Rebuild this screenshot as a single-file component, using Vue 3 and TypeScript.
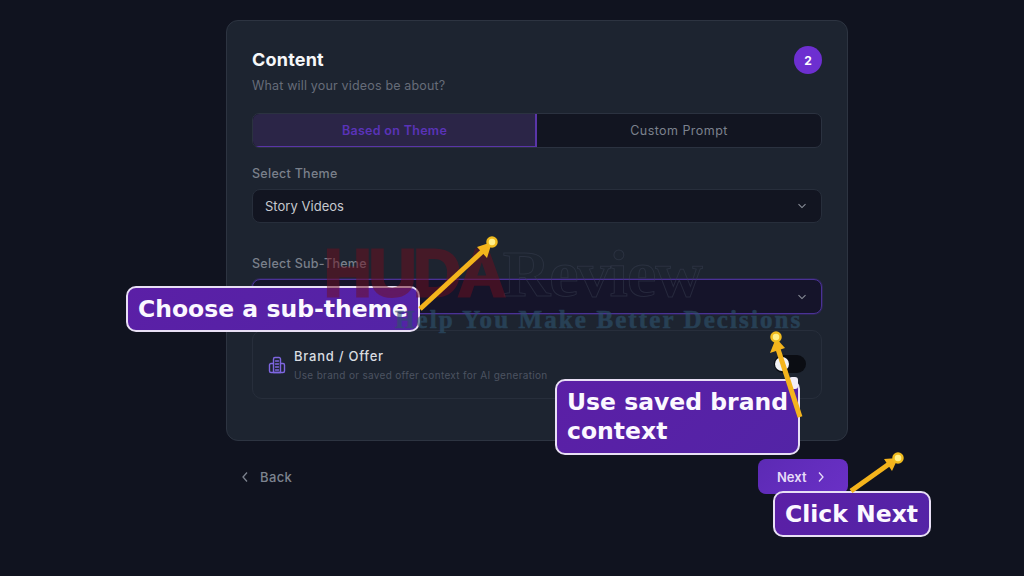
<template>
  <div class="page">
    <main class="wizard">
      <section class="card">
        <header class="card-head">
          <div>
            <h2 class="title">Content</h2>
            <p class="subtitle">What will your videos be about?</p>
          </div>
          <span class="step">2</span>
        </header>

        <div class="tabs">
          <button
            v-for="tab in tabs"
            :key="tab"
            class="tab"
            :class="{ active: tab === activeTab }"
          >
            {{ tab }}
          </button>
        </div>

        <label class="field-label">Select Theme</label>
        <div class="select">
          <span>Story Videos</span>
          <svg class="chev" viewBox="0 0 10 6"><path d="M1.5 1.2 5 4.6l3.5-3.4" /></svg>
        </div>

        <label class="field-label sub">Select Sub-Theme</label>
        <div class="select focused">
          <span></span>
          <svg class="chev" viewBox="0 0 10 6"><path d="M1.5 1.2 5 4.6l3.5-3.4" /></svg>
        </div>

        <div class="brand-row">
          <svg class="brand-icon" viewBox="0 0 18 18">
            <path d="M5.5 16.5V3a1.5 1.5 0 0 1 1.5-1.500h4A1.500 1.500 0 0 1 12.500 3v13.500z" />
            <path d="M5.500 7.500H3A1.500 1.500 0 0 0 1.500 9v6A1.500 1.500 0 0 0 3 16.500h12a1.500 1.500 0 0 0 1.500-1.500V9A1.500 1.500 0 0 0 15 7.500h-2.500" />
            <path d="M7.500 5h3M7.500 8h3M7.500 11h3M7.500 14h3" />
          </svg>
          <div class="brand-text">
            <div class="brand-name">Brand / Offer</div>
            <div class="brand-desc">Use brand or saved offer context for AI generation</div>
          </div>
          <span class="toggle"><i class="knob"></i></span>
        </div>
      </section>

      <footer class="nav">
        <button class="back">
          <svg viewBox="0 0 8 12"><path d="M6 1.500 2 6l4 4.500" /></svg>
          Back
        </button>
        <button class="next">
          Next
          <svg viewBox="0 0 8 12"><path d="M2 1.500 6 6l-4 4.500" /></svg>
        </button>
      </footer>
    </main>

    <!-- tutorial overlay -->
    <div class="callout c-sub">Choose a sub-theme</div>
    <div class="callout c-brand">Use saved brand<br />context</div>
    <div class="callout c-next">Click Next</div>
    <span class="pointer"></span>

    <!-- watermark lies over the callouts -->
    <div class="watermark">
      <div class="wm-logo"><span class="wm-huda">HUDA</span><span class="wm-review">Review</span></div>
      <div class="wm-tag">Help You Make Better Decisions</div>
    </div>

    <svg class="arrows" viewBox="0 0 1024 576">
      <g v-for="a in arrows" :key="a.id">
        <line :x1="a.x1" :y1="a.y1" :x2="a.x2" :y2="a.y2" />
        <polygon :points="a.head" />
        <circle :cx="a.dotX" :cy="a.dotY" r="4.500" />
      </g>
    </svg>
  </div>
</template>

<script setup lang="ts">
const tabs = ["Based on Theme", "Custom Prompt"];
const activeTab = "Based on Theme";

const arrows = [
  { id: "sub", x1: 420, y1: 309, x2: 484, y2: 250, head: "492,242 477,247 487,258", dotX: 492, dotY: 242 },
  { id: "brand", x1: 800, y1: 417, x2: 778, y2: 349, head: "776,338 770,353 785,348", dotX: 776, dotY: 337 },
  { id: "next", x1: 851, y1: 491, x2: 889, y2: 464, head: "898,458 884,459 892,471", dotX: 898, dotY: 458 },
];
</script>

<style>
html,
body {
  margin: 0;
  background: #10131f;
}
</style>

<style scoped>
.page {
  position: relative;
  box-sizing: border-box;
  width: 1024px;
  height: 576px;
  padding-left: 226px;
  overflow: hidden;
  background: #10131f;
  font-family: "Inter", "Open Sans", sans-serif;
}

.wizard {
  width: 622px;
  padding-top: 20px;
}

.card {
  box-sizing: border-box;
  height: 421px;
  padding: 25px;
  background: #1d2430;
  border: 1px solid #2d3441;
  border-radius: 12px;
}

.card-head {
  display: flex;
  justify-content: space-between;
  align-items: flex-start;
  height: 67px;
}

.title {
  margin: 1px 0 0;
  font-size: 18px;
  line-height: 25px;
  font-weight: 700;
  letter-spacing: 0.2px;
  color: #f6f7f9;
}

.subtitle {
  margin: 4px 0 0;
  font-size: 12.500px;
  line-height: 20px;
  letter-spacing: 0.17px;
  color: #666c79;
}

.step {
  width: 28px;
  height: 28px;
  border-radius: 50%;
  background: #6d2fd0;
  color: #fff;
  font-size: 12px;
  font-weight: 700;
  display: flex;
  align-items: center;
  justify-content: center;
}

.tabs {
  box-sizing: border-box;
  display: grid;
  grid-template-columns: 284px 1fr;
  height: 35px;
  border: 1px solid #2b3240;
  border-radius: 7px;
  overflow: hidden;
  background: #121521;
}

.tab {
  border: 0;
  padding: 0;
  background: transparent;
  font-family: inherit;
  font-size: 12.500px;
  letter-spacing: 0.45px;
  color: #7c828e;
}

.tab.active {
  padding-left: 1px;
  background: #2b2547;
  border-right: 2px solid #5a35a8;
  border-bottom: 1px solid #5a35a8;
  letter-spacing: 0.3px;
  color: #5a33b8;
  font-weight: 600;
}

.field-label {
  display: block;
  margin: 17px 0 6px;
  font-size: 12.500px;
  line-height: 18px;
  font-weight: 500;
  letter-spacing: 0.28px;
  color: #7a808b;
}

.field-label.sub {
  margin-top: 32px;
}

.select {
  box-sizing: border-box;
  height: 34px;
  padding: 0 14px 0 12px;
  display: flex;
  align-items: center;
  justify-content: space-between;
  background: #121521;
  border: 1px solid #272e3b;
  border-radius: 8px;
  font-size: 13px;
  letter-spacing: 0.03px;
  color: #c6c9cf;
}

.select.focused {
  height: 35px;
  background: #15142a;
  border-color: #4a3296;
  box-shadow: 0 0 0 1px #2c2650;
}

.chev {
  width: 10px;
  height: 6px;
  fill: none;
  stroke: #8a8f99;
  stroke-width: 1.100;
}

.brand-row {
  box-sizing: border-box;
  height: 69px;
  margin-top: 16px;
  padding: 0 15px;
  display: flex;
  align-items: center;
  gap: 8px;
  border: 1px solid #272e3b;
  border-radius: 10px;
}

.brand-icon {
  width: 18px;
  height: 18px;
  flex: none;
  fill: none;
  stroke: #7e66e0;
  stroke-width: 1.400;
  stroke-linejoin: round;
  stroke-linecap: round;
}

.brand-text {
  flex: 1;
}

.brand-name {
  font-size: 13px;
  line-height: 19px;
  font-weight: 500;
  letter-spacing: 0.75px;
  color: #d9dce1;
}

.brand-desc {
  margin-top: 3px;
  font-size: 10px;
  line-height: 13px;
  letter-spacing: 0.32px;
  color: #4c5361;
}

.toggle {
  position: relative;
  width: 32px;
  height: 18px;
  margin-top: -1px;
  border-radius: 9px;
  background: #0b0d13;
}

.knob {
  position: absolute;
  left: 1px;
  top: 2px;
  width: 14px;
  height: 14px;
  border-radius: 50%;
  background: #f2f2f4;
}

.nav {
  display: flex;
  justify-content: space-between;
  align-items: center;
  margin-top: 18px;
}

.back {
  display: flex;
  align-items: center;
  gap: 11px;
  margin-left: 15px;
  padding: 0;
  border: 0;
  background: transparent;
  font-family: inherit;
  font-size: 13px;
  font-weight: 500;
  letter-spacing: 0.4px;
  color: #7d838f;
}

.back svg,
.next svg {
  width: 8px;
  height: 12px;
  fill: none;
  stroke: currentColor;
  stroke-width: 1.300;
}

.next {
  box-sizing: border-box;
  width: 90px;
  height: 35px;
  padding: 0 0 0 19px;
  display: flex;
  align-items: center;
  gap: 11px;
  border: 0;
  border-radius: 8px;
  background: linear-gradient(135deg, #5c2ab4, #6a30c6);
  font-family: inherit;
  font-size: 13px;
  font-weight: 600;
  color: #e6dcf8;
}

.callout {
  position: absolute;
  box-sizing: border-box;
  padding: 0 10px;
  border: 2px solid #e8dff5;
  border-radius: 10px;
  background: linear-gradient(135deg, #5b1fa6, #5324a6);
  font-family: "DejaVu Sans", sans-serif;
  font-size: 23.500px;
  font-weight: 700;
  line-height: 29px;
  color: #fbf8ff;
  white-space: nowrap;
}

.c-sub {
  left: 126px;
  top: 286px;
  width: 294px;
  height: 46px;
  line-height: 42px;
}

.c-brand {
  left: 555px;
  top: 379px;
  width: 245px;
  height: 76px;
  padding-top: 7px;
}

.c-next {
  left: 773px;
  top: 491px;
  width: 158px;
  height: 46px;
  line-height: 42px;
}

.pointer {
  position: absolute;
  left: 789px;
  top: 377px;
  width: 9px;
  height: 12px;
  border-radius: 3px;
  background: #f1edf7;
}

.watermark {
  position: absolute;
  left: 324px;
  top: 243px;
  width: 490px;
  pointer-events: none;
}

.wm-logo {
  font-family: "Liberation Sans", sans-serif;
  font-size: 66px;
  line-height: 60px;
  white-space: nowrap;
}

.wm-huda {
  font-weight: 700;
  letter-spacing: -3px;
  color: #6e1020;
  -webkit-text-stroke: 3px #6e1020;
  opacity: 0.5;
}

.wm-review {
  font-family: "Liberation Serif", serif;
  font-weight: 700;
  letter-spacing: -1px;
  color: transparent;
  -webkit-text-stroke: 1px rgba(60, 66, 84, 0.45);
}

.wm-tag {
  margin: 3px 0 0 71px;
  font-family: "Liberation Serif", serif;
  font-size: 25px;
  line-height: 26px;
  font-weight: 700;
  letter-spacing: 2.100px;
  white-space: nowrap;
  color: #2e526c;
  -webkit-text-stroke: 0.6px #2e526c;
  opacity: 0.62;
}

.arrows {
  position: absolute;
  inset: 0;
  width: 1024px;
  height: 576px;
  pointer-events: none;
}

.arrows line {
  stroke: #f4b41c;
  stroke-width: 5;
}

.arrows polygon {
  fill: #f4b41c;
}

.arrows circle {
  fill: #fff08a;
  stroke: #f0bb1e;
  stroke-width: 2.500;
}
</style>
